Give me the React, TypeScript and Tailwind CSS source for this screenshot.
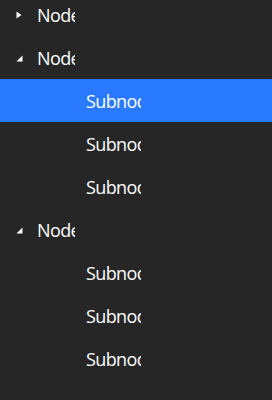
import React from "react";

interface TreeNode {
  label: string;
  expanded?: boolean;
  children?: string[];
}

const nodes: TreeNode[] = [
  { label: "Node", expanded: false },
  { label: "Node", expanded: true, children: ["Subnode", "Subnode", "Subnode"] },
  { label: "Node", expanded: true, children: ["Subnode", "Subnode", "Subnode"] },
];

function Chevron({ expanded }: { expanded?: boolean }) {
  if (expanded) {
    return (
      <svg width="7" height="7" viewBox="0 0 7 7" className="block">
        <polygon points="6.5,0.5 6.5,6.5 0.5,6.5" fill="#ffffff" />
      </svg>
    );
  }
  return (
    <svg width="6" height="8" viewBox="0 0 6 8" className="block">
      <polygon points="0.5,0.5 5.5,4 0.5,7.5" fill="#ffffff" />
    </svg>
  );
}

export default function App() {
  // first selected subnode, like the screenshot
  const selected = "1-0";

  return (
    <div
      className="w-[272px] h-[400px] overflow-hidden bg-[#262626] text-white"
      style={{ fontFamily: '"Open Sans", "Noto Sans", sans-serif' }}
    >
      <div className="-mt-[7px] flex flex-col">
        {nodes.map((node, i) => (
          <div key={i} className="flex flex-col">
            <div className="flex h-[43px] items-center">
              <div className="flex w-[37px] shrink-0 items-center pl-[16px] pt-[1px]">
                <Chevron expanded={node.expanded} />
              </div>
              <div className="w-[38px] overflow-hidden whitespace-nowrap text-[18px] leading-none tracking-[-0.6px]">
                {node.label}
              </div>
            </div>
            {node.expanded &&
              node.children?.map((child, j) => (
                <div
                  key={j}
                  className={`flex h-[43px] items-center pl-[86px] ${
                    selected === `${i}-${j}` ? "bg-[#2a7aff]" : ""
                  }`}
                >
                  <div className="w-[55px] overflow-hidden whitespace-nowrap text-[18px] leading-none tracking-[-0.6px]">
                    {child}
                  </div>
                </div>
              ))}
          </div>
        ))}
      </div>
    </div>
  );
}
